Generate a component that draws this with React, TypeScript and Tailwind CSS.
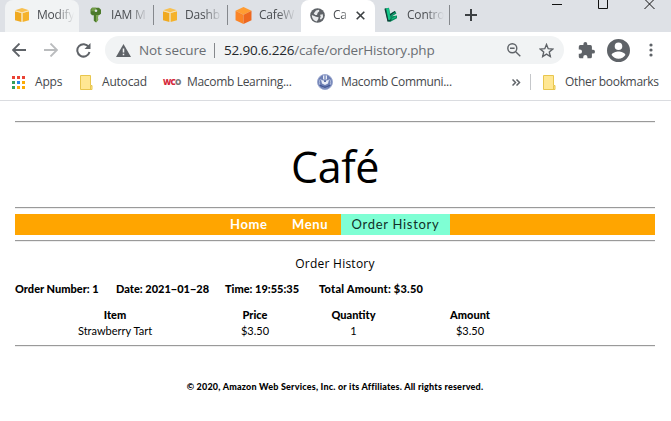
import React from 'react';

const ui = "font-['Open_Sans','Noto_Sans',sans-serif]";

function AwsCube() {
  return (
    <svg className="size-4 shrink-0" viewBox="0 0 16 16">
      <path d="M1 3.200 8 1l7 2.200L8 5.400Z" fill="#f8c050" />
      <path d="M1 4.200 7.500 6v9L1 13.200Z" fill="#f0a91f" />
      <path d="M15 4.200 8.500 6v9l6.500-1.800Z" fill="#f5b22b" />
      <path d="M1 3.700 8 5.700l7-2M8 5.700V15" stroke="#fbe3ac" strokeWidth=".8" fill="none" />
    </svg>
  );
}

function KeyIcon() {
  return (
    <svg className="size-4 shrink-0" viewBox="0 0 16 16">
      <path d="M4 .7h7l2 2v4l-2 1.600H9.800v5.200L8 15.500l-2.200-1.700V8.300H4L2.500 6.500v-4Z" fill="#4c7a2b" />
      <path d="M8 8h2.300v2l-1 .8 1 1V13L8 15.500Z" fill="#7da650" />
      <path d="M4 .7h4v3.500H3Z" fill="#719c45" />
      <circle cx="8" cy="3.700" r="1.300" fill="#dee1e6" />
    </svg>
  );
}

function Cloud9Cube() {
  return (
    <svg className="size-[17px] shrink-0" viewBox="0 0 16 16">
      <path d="m8 0 7.500 3.500L8 7.200.5 3.500Z" fill="#ff9c32" />
      <path d="M.5 3.500 8 7.200V16L.5 12.500Z" fill="#fb8426" />
      <path d="M15.500 3.500 8 7.200V16l7.500-3.500Z" fill="#ee681f" />
    </svg>
  );
}

function Globe() {
  return (
    <svg className="size-[15px] shrink-0" viewBox="0 0 15 15">
      <circle cx="7.500" cy="7.500" r="7.300" fill="#5f6368" />
      <path d="M1.800 7 6 8.700 8.600 9.200 8.300 11 6.800 13.400A6 6 0 0 1 1.800 7ZM6 2.500l3-.8.3 1.500-1.600 1.500L7 7H5.200L3.700 5.500ZM10 6.800l2.800-.5.3 3-2.200 2.400-1-1.200.8-2Z" fill="#e8eaec" />
    </svg>
  );
}

function GreenMark() {
  return (
    <svg className="size-4 shrink-0" viewBox="0 0 16 16">
      <path d="m1 1.500 4-.8 1 6L11 4l1.500 2.500L8 9.200l5-.7v2.800L6 15l-2.500-1Z" fill="#0a8b5d" />
      <path d="m2.500 2 2-.4L6 11l-1.500 3M7 8l4-2.500M8 12l4-2.200" fill="#13c98a" stroke="#16c288" />
      <path d="m1 1.500 3 12.500 3-1M6 8l5-3.500" stroke="#103e37" strokeWidth="1.200" fill="none" />
    </svg>
  );
}

function Folder() {
  return (
    <svg className="h-[15px] w-[13px] shrink-0" viewBox="0 0 13 15">
      <path d="M.5.500h10v10h1.500v4H.5Z" fill="#ffe793" stroke="#e8c64e" />
      <path d="M10.500 14v-3h1" fill="none" stroke="#e8c64e" />
    </svg>
  );
}

function Seal() {
  return (
    <svg className="size-4 shrink-0" viewBox="0 0 16 16">
      <circle cx="8" cy="8" r="7.500" fill="#6d7fb4" stroke="#9ba8cf" />
      <path d="M3.500 5a5.500 5.500 0 1 0 9 0" stroke="#aebada" fill="none" />
      <path d="M6 1.500h4v5l2-1-1 4-3 1.500-3-1.500-1-4 2 1Z" fill="#e9edf7" />
      <path d="M8 1.500v6M6.500 5.500 8 8l1.500-2.500" stroke="#4d62a0" fill="none" />
      <path d="M3 11q5 4.500 10 0" stroke="#425694" fill="none" strokeWidth="1.500" />
    </svg>
  );
}

type TabProps = { icon: React.ReactNode; label: string; tone?: 'hover' | 'active'; divider?: boolean };

function Tab({ icon, label, tone, divider }: TabProps) {
  const bg = tone === 'active' ? 'bg-white rounded-t-lg' : tone === 'hover' ? 'bg-[#f1f3f4] rounded-t-lg' : '';
  return (
    <div className={`flex h-8 w-[74px] shrink-0 items-center pb-[2px] pl-2 ${bg}`}>
      <div className="flex w-[17px] shrink-0 justify-center">{icon}</div>
      <span
        className={`ml-[7px] shrink-0 whitespace-nowrap text-[12px] tracking-[-0.2px] text-[#4a4d51] [mask-image:linear-gradient(to_right,black_50%,transparent)] ${tone === 'active' ? 'w-[18px]' : 'w-[37px]'}`}
      >
        {label}
      </span>
      {tone === 'active' && (
        <svg className="ml-[5px] size-[9px]" viewBox="0 0 9 9">
          <path d="m.7.700 7.600 7.600m0-7.600L.7 8.300" stroke="#3c4043" strokeWidth="1.600" />
        </svg>
      )}
      {divider && <div className="-mr-px ml-auto h-[20px] w-px shrink-0 bg-[#85888d]" />}
    </div>
  );
}

const appDots = ['#ea4335', '#ea4335', '#ea4335', '#34a05a', '#2687e9', '#fbab05', '#34a05a', '#fbab05', '#fbab05'];

function Browser() {
  return (
    <header className={ui}>
      <div className="flex h-8 bg-[#dee1e6] pl-[5px]">
        <Tab icon={<AwsCube />} label="Modify" tone="hover" />
        <Tab icon={<KeyIcon />} label="IAM M" divider />
        <Tab icon={<AwsCube />} label="Dashb" divider />
        <Tab icon={<Cloud9Cube />} label="CafeW" />
        <Tab icon={<Globe />} label="Ca" tone="active" />
        <Tab icon={<GreenMark />} label="Contro" divider />
        <svg className="ml-4 mt-[9px] size-3 shrink-0" viewBox="0 0 12 12">
          <path d="M6 0v12M0 6h12" stroke="#3c4043" strokeWidth="2" />
        </svg>
        <svg className="ml-auto mr-[13px] h-[10px] w-[106px] shrink-0" viewBox="0 0 106 10" fill="none" stroke="#111">
          <path d="M0 4.500h10M46.500-1v9.500h9V-1M92.500-1l10 10m0-10-10 10" />
        </svg>
      </div>

      <div className="flex h-9 items-center bg-white">
        <svg className="ml-[12px] size-[14px]" viewBox="0 0 14 14" fill="none" stroke="#5f6368" strokeWidth="1.800">
          <path d="M14 7H1m6.500-6.500L1 7l6.500 6.500" />
        </svg>
        <svg className="ml-[18px] size-[14px]" viewBox="0 0 14 14" fill="none" stroke="#babcbe" strokeWidth="1.800">
          <path d="M0 7h13M6.500.5 13 7l-6.500 6.500" />
        </svg>
        <svg className="ml-[18px] size-[15px]" viewBox="0 0 15 15" fill="none" stroke="#5f6368" strokeWidth="2">
          <path d="M12.700 4A6.200 6.200 0 1 0 13.500 9" />
          <path d="M14.500 0v6H8.500Z" fill="#5f6368" stroke="none" />
        </svg>
        <div className="ml-[14px] flex h-7 w-[459px] shrink-0 items-center rounded-full bg-[#f1f3f4] pl-[11px]">
          <svg className="h-[13px] w-[15px] shrink-0" viewBox="0 0 15 13">
            <path d="M7.500 0 15 13H0Z" fill="#5f6368" />
            <path d="M7.500 4.500v4M7.500 9.700v1.600" stroke="#f1f3f4" strokeWidth="1.500" />
          </svg>
          <span className="ml-2 w-[67px] whitespace-nowrap text-[13.500px] tracking-[-0.120px] text-[#6a6e73]">Not secure</span>
          <div className="ml-[8px] h-[15px] w-px bg-[#85888c]" />
          <span className="ml-[9px] whitespace-nowrap text-[13.500px] tracking-[-0.190px] text-[#6a6e73]">
            <span className="text-[#24272a]">52.90.6.226</span>/cafe/orderHistory.php
          </span>
          <svg className="ml-auto size-[14px]" viewBox="0 0 14 14" fill="none" stroke="#5f6368" strokeWidth="1.400">
            <circle cx="5.300" cy="5.300" r="4.500" />
            <path d="m8.700 8.700 4.600 4.600M3 5.300h4.600" />
          </svg>
          <svg className="ml-[18px] mr-[10px] size-[15px]" viewBox="0 0 15 15" fill="none" stroke="#5f6368" strokeWidth="1.400">
            <path d="m7.500 1.500 1.700 4.200 4.500.4-3.400 3 1 4.400-3.800-2.400-3.800 2.400 1-4.400-3.400-3 4.500-.4Z" />
          </svg>
        </div>
        <svg className="ml-[14px] size-[17px]" viewBox="1 1 22 22" fill="#5f6368">
          <path d="M20.500 11H19V7a2 2 0 0 0-2-2h-4V3.500a2.500 2.500 0 0 0-5 0V5H4a2 2 0 0 0-2 2v3.800h1.500a2.700 2.700 0 0 1 0 5.400H2V20c0 1.100.9 2 2 2h3.800v-1.500a2.700 2.700 0 0 1 5.400 0V22H17a2 2 0 0 0 2-2v-4h1.500a2.500 2.500 0 0 0 0-5Z" />
        </svg>
        <svg className="ml-3 size-[23px]" viewBox="2 2 20 20" fill="#5f6368">
          <path d="M12 2a10 10 0 1 0 0 20 10 10 0 0 0 0-20Zm0 3a3.300 3.300 0 1 1 0 6.600A3.300 3.300 0 0 1 12 5Zm0 14.200A7.200 7.200 0 0 1 6 16c0-2 4-3.100 6-3.100s6 1.100 6 3.100a7.200 7.200 0 0 1-6 3.200Z" />
        </svg>
        <svg className="ml-[19px] h-[14px] w-1" viewBox="0 0 4 14" fill="#5f6368">
          <circle cx="2" cy="2" r="1.600" /><circle cx="2" cy="7" r="1.600" /><circle cx="2" cy="12" r="1.600" />
        </svg>
      </div>

      <div className="flex h-[33px] items-center whitespace-nowrap border-b border-[#dadce0] bg-white pb-[4px] text-[12px] tracking-[-0.320px] text-[#45484c]">
        <svg className="ml-3 size-[13px] shrink-0" viewBox="0 0 13 13">
          {appDots.map((c, i) => (
            <rect key={i} x={(i % 3) * 5} y={Math.floor(i / 3) * 5} width="3" height="3" fill={c} />
          ))}
        </svg>
        <span className="ml-[10px] w-[45px] tracking-[-0.2px]">Apps</span>
        <Folder />
        <span className="ml-[9px] w-[61px] tracking-[-0.200px]">Autocad</span>
        <span className="flex w-4 shrink-0 text-[8px] font-extrabold tracking-[-0.700px] text-[#d5283a]">WC<span className="text-[#777]">O</span></span>
        <span className="ml-[8px] w-[130px]">Macomb Learning...</span>
        <Seal />
        <span className="ml-[8px] w-[170px]">Macomb Communi...</span>
        <svg className="ml-px h-[7px] w-[9px] shrink-0" viewBox="0 0 9 7" fill="none" stroke="#5f6368" strokeWidth="1.500">
          <path d="m.5.500 3 3-3 3m4-6 3 3-3 3" />
        </svg>
        <div className="ml-[9px] h-4 w-px bg-[#c5c7ca]" />
        <div className="ml-3 flex items-center">
          <Folder />
          <span className="ml-[9px]">Other bookmarks</span>
        </div>
      </div>
    </header>
  );
}

function Rule() {
  return <div className="h-[2px] border-b border-t border-b-[#eeeeee] border-t-[#9a9a9a]" />;
}

export default function App() {
  return (
    <div className="h-[421px] w-[671px] overflow-hidden bg-white text-black">
      <Browser />
      <main className="px-[15px] pr-4 pt-5 font-['Lato','Open_Sans',sans-serif]">
        <Rule />
        <h1 className="flex h-[84px] items-center justify-center pt-[2px] font-['Comic_Sans_MS','Open_Sans',sans-serif] text-[43px] font-medium leading-none tracking-[-0.400px]">Café</h1>
        <Rule />
        <nav className="mb-[5px] mt-[5px] flex h-[21px] items-center whitespace-nowrap bg-[#ffa500] pl-[215px] text-[13px] tracking-[0.600px] text-white">
          <span className="w-[62px] font-bold">Home</span>
          <span className="w-[49px] font-bold">Menu</span>
          <span className="flex h-full w-[109px] items-center justify-center bg-[#7fffd4] tracking-[0.700px] text-[#123028]">Order History</span>
        </nav>
        <Rule />
        <h2 className="mt-[14px] text-center font-['Comic_Sans_MS','Open_Sans',sans-serif] text-[12px] leading-4 tracking-[0.250px]">Order History</h2>
        <div className="mt-[9px] flex h-4 items-center whitespace-nowrap text-[11px] font-black">
          <span className="w-[101px]">Order Number: 1</span>
          <span className="w-[109px]">Date: 2021−01−28</span>
          <span className="w-[94px]">Time: 19:55:35</span>
          <span className="tracking-[0.220px]">Total Amount: $3.50</span>
        </div>
        <div className="mt-[10px] grid grid-cols-[200px_80px_117px_116px] text-center text-[11px] leading-4">
          <b className="font-black">Item</b><b className="font-black">Price</b><b className="font-black">Quantity</b><b className="font-black">Amount</b>
          <span>Strawberry Tart</span><span>$3.50</span><span>1</span><span>$3.50</span>
        </div>
        <div className="mt-[6px]"><Rule /></div>
        <footer className="mt-[32px] whitespace-nowrap text-center text-[9px] font-black leading-4 tracking-[0.200px]">© 2020, Amazon Web Services, Inc. or its Affiliates. All rights reserved.</footer>
      </main>
    </div>
  );
}
